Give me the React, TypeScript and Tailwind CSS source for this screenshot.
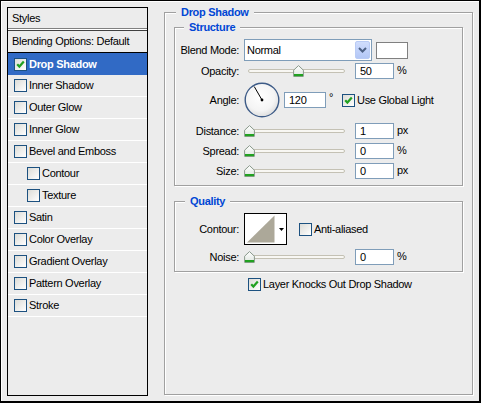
import React from "react";

const font = "font-['Liberation_Sans',Arial,sans-serif]";

const styleItems = [
  { name: "Drop Shadow", checked: true, active: true },
  { name: "Inner Shadow" },
  { name: "Outer Glow" },
  { name: "Inner Glow" },
  { name: "Bevel and Emboss" },
  { name: "Contour", sub: true },
  { name: "Texture", sub: true },
  { name: "Satin" },
  { name: "Color Overlay" },
  { name: "Gradient Overlay" },
  { name: "Pattern Overlay" },
  { name: "Stroke" },
];

function Check({ checked = false }: { checked?: boolean }) {
  return (
    <span className="relative inline-block w-[13px] h-[13px] shrink-0 border border-[#1c5180] bg-linear-to-br from-[#dcdcd7] to-white">
      {checked && (
        <svg viewBox="0 0 11 11" className="absolute inset-0 w-[11px] h-[11px]">
          <path d="M2.2 5.2 L4.4 7.6 L8.8 2.6" stroke="#21a121" strokeWidth="2.2" fill="none" />
        </svg>
      )}
    </span>
  );
}

function StylesList() {
  return (
    <div className="ml-[6px] mt-[6px] w-[141px] h-[389px] border border-black flex flex-col">
      <div className="h-[21px] pl-[4px] flex items-center border-b border-[#808080]">Styles</div>
      <div className="h-[1px] bg-white" />
      <div className="h-[1px] bg-[#404040]" />
      <div className="h-[22px] pl-[4px] flex items-center border-b border-black">
        Blending Options: Default
      </div>
      {styleItems.map((s) =>
        s.active ? (
          <div key={s.name} className="h-[22px] pl-[6px] flex items-center gap-[2px] bg-[#316ac5] text-white font-bold">
            <Check checked={s.checked} />
            <span>{s.name}</span>
          </div>
        ) : (
          <div
            key={s.name}
            className={`h-[22px] flex items-center gap-[2px] border-b border-white ${s.sub ? "pl-[19px]" : "pl-[6px]"}`}
          >
            <Check checked={s.checked} />
            <span>{s.name}</span>
          </div>
        )
      )}
    </div>
  );
}

function Legend({ text, left }: { text: string; left: string }) {
  return (
    <span className={`absolute -top-[8px] ${left} px-[5px] bg-[#ececec] text-[#0046d5] font-bold leading-[14px]`}>
      {text}
    </span>
  );
}

function NumBox({ value, w = "w-[39px]" }: { value: string; w?: string }) {
  return (
    <div className={`${w} h-[16px] border border-[#7f9db9] bg-white pl-[4px] flex items-center leading-none`}>
      {value}
    </div>
  );
}

function Thumb() {
  return (
    <svg viewBox="0 0 11 12" className="w-[11px] h-[12px]">
      <defs>
        <linearGradient id="thumbFill" x1="0" y1="0" x2="0" y2="1">
          <stop offset="0" stopColor="#ffffff" />
          <stop offset="1" stopColor="#dfe6df" />
        </linearGradient>
      </defs>
      <path d="M5.5 0.6 L10.4 5.2 V11.4 H0.6 V5.2 Z" fill="url(#thumbFill)" stroke="#8a9a8c" strokeWidth="1" />
      <rect x="1" y="9" width="9" height="2.2" fill="#21a121" />
    </svg>
  );
}

function Slider({ value }: { value: number }) {
  return (
    <div className="relative w-[106px] h-full">
      <div className="absolute left-[4px] right-[5px] top-1/2 -translate-y-1/2 h-[4px] rounded-[2px] border border-[#c4c1b4] bg-[#f8f7f3]" />
      <div className="absolute top-1/2 -translate-y-1/2 flex" style={{ left: `${value * 0.97}px` }}>
        <Thumb />
      </div>
    </div>
  );
}

function Label({ children }: { children: React.ReactNode }) {
  return <div className="w-[64px] text-right shrink-0">{children}</div>;
}

function SliderRow({
  label,
  value,
  pos,
  unit,
  mt,
}: {
  label: string;
  value: number;
  pos: number;
  unit: string;
  mt: string;
}) {
  return (
    <div className={`${mt} h-[16px] flex items-center`}>
      <Label>{label}</Label>
      <div className="ml-[5px] h-full">
        <Slider value={pos} />
      </div>
      <div className="ml-[5px]">
        <NumBox value={String(value)} />
      </div>
      <span className="ml-[3px] -mt-[2px]">{unit}</span>
    </div>
  );
}

function Dial({ angle }: { angle: number }) {
  const r = (angle * Math.PI) / 180;
  const x = 18 + Math.cos(r) * 15.5;
  const y = 18 - Math.sin(r) * 15.5;
  return (
    <svg viewBox="0 0 36 36" className="w-[36px] h-[36px]">
      <defs>
        <radialGradient id="dialFill" cx="0.45" cy="0.4" r="0.6">
          <stop offset="0" stopColor="#ffffff" />
          <stop offset="0.7" stopColor="#f4f4f4" />
          <stop offset="1" stopColor="#dedede" />
        </radialGradient>
      </defs>
      <circle cx="18" cy="18" r="16.8" fill="url(#dialFill)" stroke="#3d5b87" strokeWidth="1.4" />
      <line x1="18" y1="18" x2={x} y2={y} stroke="#000" strokeWidth="1" />
      <circle cx="18" cy="18" r="1.4" fill="#000" />
    </svg>
  );
}

function DropShadow() {
  return (
    <div className="relative w-[309px] h-[383px] border border-[#a0a0a0] shadow-[inset_1px_1px_0_#fff,1px_1px_0_#fff] pl-[9px] pt-[14px] flex flex-col">
      <Legend text="Drop Shadow" left="left-[11px]" />

      <div className="relative w-[289px] h-[159px] border border-[#a0a0a0] shadow-[inset_1px_1px_0_#fff,1px_1px_0_#fff] pt-[11px] flex flex-col">
        <Legend text="Structure" left="left-[9px]" />

        <div className="h-[22px] flex items-center">
          <Label>Blend Mode:</Label>
          <div className="ml-[5px] w-[128px] h-[22px] border border-[#7f9db9] bg-white flex items-center justify-between">
            <span className="pl-[2px]">Normal</span>
            <div className="w-[15px] h-[18px] mr-[1px] rounded-[2px] bg-linear-to-b from-[#d0ddfd] to-[#b3c7f6] border border-[#b9cbf5] flex items-center justify-center">
              <svg viewBox="0 0 9 6" className="w-[9px] h-[6px]">
                <path d="M1 1 L4.5 4.5 L8 1" stroke="#4d6185" strokeWidth="2" fill="none" />
              </svg>
            </div>
          </div>
          <div className="ml-[4px] w-[32px] h-[17px] border border-[#808080] bg-white" />
        </div>

        <SliderRow label="Opacity:" value={50} pos={50} unit="%" mt="mt-[2px]" />

        <div className="mt-[3px] h-[36px] flex items-center">
          <Label>Angle:</Label>
          <div className="ml-[5px] flex">
            <Dial angle={120} />
          </div>
          <div className="ml-[4px]">
            <NumBox value="120" w="w-[42px]" />
          </div>
          <span className="w-[16px] pl-[3px] -mt-[6px]">°</span>
          <Check checked />
          <span className="ml-[2px]">Use Global Light</span>
        </div>

        <SliderRow label="Distance:" value={1} pos={0} unit="px" mt="mt-[5px]" />
        <SliderRow label="Spread:" value={0} pos={0} unit="%" mt="mt-[4px]" />
        <SliderRow label="Size:" value={0} pos={0} unit="px" mt="mt-[4px]" />
      </div>

      <div className="relative mt-[15px] w-[289px] h-[71px] border border-[#a0a0a0] shadow-[inset_1px_1px_0_#fff,1px_1px_0_#fff] pt-[11px] flex flex-col">
        <Legend text="Quality" left="left-[10px]" />

        <div className="h-[32px] flex items-center">
          <Label>Contour:</Label>
          <div className="ml-[5px] w-[43px] h-[32px] border border-black bg-white flex">
            <svg viewBox="0 0 31 30" className="w-[31px] h-[30px]">
              <polygon points="2,28.5 29.5,1.5 29.5,28.5" fill="#aca899" />
            </svg>
            <div className="flex-1 flex items-center justify-center">
              <svg viewBox="0 0 5 3" className="w-[5px] h-[3px]">
                <polygon points="0,0 5,0 2.5,3" fill="#000" />
              </svg>
            </div>
          </div>
          <div className="ml-[12px] flex items-center">
            <Check />
            <span className="ml-[2px]">Anti-aliased</span>
          </div>
        </div>

        <SliderRow label="Noise:" value={0} pos={0} unit="%" mt="mt-[4px]" />
      </div>

      <div className="mt-[6px] ml-[74px] h-[13px] flex items-center">
        <Check checked />
        <span className="ml-[2px]">Layer Knocks Out Drop Shadow</span>
      </div>
    </div>
  );
}

export default function App() {
  return (
    <div
      className={`w-[481px] h-[403px] bg-[#ececec] border-l border-t border-r-2 border-b-2 border-black shadow-[inset_1px_1px_0_#fff] flex items-start text-[11px] leading-[13px] text-black tracking-[-0.3px] ${font}`}
    >
      <StylesList />
      <div className="ml-[16px] mt-[11px]">
        <DropShadow />
      </div>
    </div>
  );
}
